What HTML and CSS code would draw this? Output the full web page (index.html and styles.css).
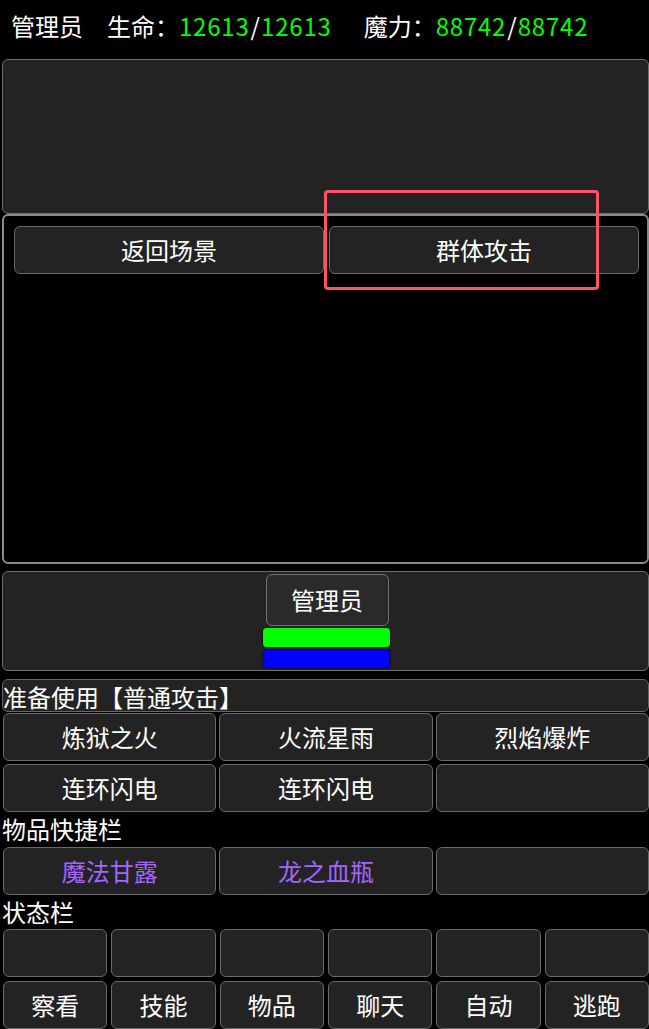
FILE: index.html
```html
<!DOCTYPE html>
<html lang="zh">
<head>
<meta charset="utf-8">
<title>战斗</title>
<link rel="stylesheet" href="styles.css">
</head>
<body>
<div class="page">
  <div class="header">
    <span class="name">管理员</span>
    <span class="stat">生命：<span class="num">12613</span><span class="slash">/</span><span class="num">12613</span></span>
    <span class="stat">魔力：<span class="num">88742</span><span class="slash">/</span><span class="num">88742</span></span>
  </div>

  <div class="panel scene"></div>

  <div class="battle">
    <div class="battle-actions">
      <div class="btn">返回场景</div>
      <div class="btn">群体攻击</div>
    </div>
  </div>

  <div class="panel player">
    <div class="btn player-name">管理员</div>
    <div class="bar bar-hp"></div>
    <div class="bar bar-mp"></div>
  </div>

  <div class="ready">准备使用【普通攻击】</div>

  <div class="grid3">
    <div class="btn">炼狱之火</div>
    <div class="btn">火流星雨</div>
    <div class="btn">烈焰爆炸</div>
    <div class="btn">连环闪电</div>
    <div class="btn">连环闪电</div>
    <div class="btn"></div>
  </div>

  <div class="label">物品快捷栏</div>
  <div class="grid3">
    <div class="btn item">魔法甘露</div>
    <div class="btn item">龙之血瓶</div>
    <div class="btn"></div>
  </div>

  <div class="label">状态栏</div>
  <div class="grid6">
    <div class="btn"></div>
    <div class="btn"></div>
    <div class="btn"></div>
    <div class="btn"></div>
    <div class="btn"></div>
    <div class="btn"></div>
  </div>
  <div class="grid6 bottom">
    <div class="btn">察看</div>
    <div class="btn">技能</div>
    <div class="btn">物品</div>
    <div class="btn">聊天</div>
    <div class="btn">自动</div>
    <div class="btn">逃跑</div>
  </div>
</div>
<div class="highlight"></div>
</body>
</html>
```

FILE: styles.css
```css
html, body {
  margin: 0;
  padding: 0;
  background: #000;
  overflow: hidden;
}
body {
  width: 649px;
  height: 1029px;
  position: relative;
  font-family: "Noto Sans CJK SC", "Noto Sans", sans-serif;
  font-size: 24px;
  color: #fff;
}
.page {
  padding-left: 2px;
  width: 647px;
}
.header {
  height: 59px;
  display: flex;
  align-items: center;
  padding-left: 9px;
  box-sizing: border-box;
  padding-bottom: 8px;
  white-space: nowrap;
  line-height: 1;
}
.header .name { margin-right: 24px; }
.header .stat { margin-right: 32px; }
.num { color: #00ff00; letter-spacing: 0.8px; }
.slash { margin: 0 1px; }

.panel {
  background: #232323;
  border: 1px solid #6e6e6e;
  border-radius: 6px;
  box-sizing: border-box;
}
.scene {
  height: 155px;
}
.battle {
  height: 350px;
  box-sizing: border-box;
  border: 2px solid #8a8a8a;
  border-radius: 6px;
  background: #000;
  padding: 10px 8px 0 10px;
}
.battle-actions {
  display: grid;
  grid-template-columns: 1fr 1fr;
  gap: 5px;
}
.battle-actions .btn { height: 48px; }

.btn {
  background: #232323;
  border: 1px solid #6a6a6a;
  border-radius: 6px;
  box-sizing: border-box;
  display: flex;
  align-items: center;
  justify-content: center;
  color: #fff;
  line-height: 1;
  white-space: nowrap;
}
.player {
  margin-top: 7px;
  height: 100px;
  display: flex;
  flex-direction: column;
  align-items: center;
  padding-top: 2px;
}
.player-name {
  width: 123px;
  height: 52px;
  background: #2a2a2a;
  border-color: #707070;
  margin-left: 3px;
}
.bar {
  width: 129px;
  height: 21px;
  border: 1px solid #111;
  border-radius: 4px;
  box-sizing: border-box;
  margin-left: 2px;
}
.bar-hp { background: #00ff00; margin-top: 1px; }
.bar-mp { background: #0000ff; margin-top: 1px; height: 20px; }

.ready {
  margin-top: 8px;
  height: 33px;
  background: #232323;
  border: 1px solid #666;
  border-radius: 6px;
  box-sizing: border-box;
  display: flex;
  align-items: center;
  line-height: 1;
  padding-top: 2px;
  white-space: nowrap;
}
.grid3 {
  display: grid;
  grid-template-columns: repeat(3, 1fr);
  grid-auto-rows: 48px;
  gap: 3px;
  margin-left: 1px;
  margin-top: 1px;
}
.grid6 {
  display: grid;
  grid-template-columns: repeat(6, 1fr);
  grid-auto-rows: 48px;
  gap: 4px;
  margin-left: 1px;
}
.grid6.bottom { margin-top: 4px; }
.label {
  height: 34px;
  display: flex;
  align-items: center;
  line-height: 1;
}
.item { color: #a366ff; }

.highlight {
  position: absolute;
  left: 324px;
  top: 190px;
  width: 275px;
  height: 100px;
  box-sizing: border-box;
  border: 3px solid #ff5468;
  border-radius: 4px;
  pointer-events: none;
}
```
